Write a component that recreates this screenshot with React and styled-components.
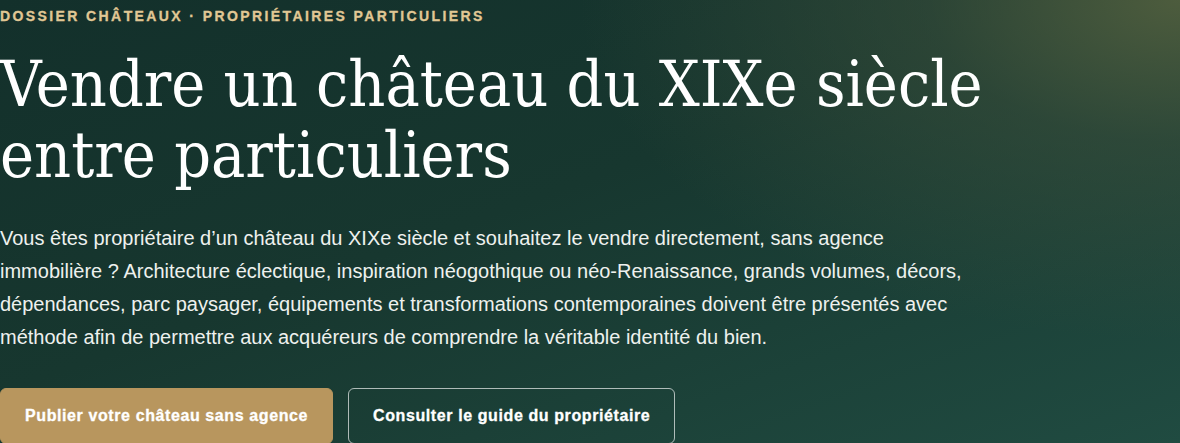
import React from "react"
import styled, { createGlobalStyle } from "styled-components"

const Global = createGlobalStyle`
  html, body {
    margin: 0;
    padding: 0;
    background: #14312c;
  }
  * { box-sizing: border-box; }
`

const Hero = styled.section`
  min-height: 443px;
  width: 100%;
  overflow: hidden;
  padding: 8px 0 0 0;
  color: #fff;
  background:
    radial-gradient(ellipse 600px 340px at 100% 0%, rgba(80, 94, 62, 0.95) 0%, rgba(64, 82, 60, 0.5) 42%, rgba(40, 70, 58, 0) 100%),
    linear-gradient(160deg, #13302b 0%, #17372f 45%, #204b41 100%);
`

const Eyebrow = styled.p`
  margin: 0;
  font-family: "Liberation Sans", Arial, sans-serif;
  font-weight: 700;
  font-size: 14px;
  letter-spacing: 2.4px;
  line-height: 16px;
  text-transform: uppercase;
  color: #e0c794;
  -webkit-text-stroke: 0.3px #e0c794;
`

const Title = styled.h1`
  margin: 25px 0 0 0;
  font-family: "DejaVu Serif Condensed", "DejaVu Serif", Georgia, serif;
  font-weight: 400;
  font-size: 64px;
  line-height: 71px;
  color: #fff;
`

const Lead = styled.p`
  margin: 31px 0 0 0;
  max-width: 980px;
  font-family: "Liberation Sans", Arial, sans-serif;
  font-size: 20px;
  line-height: 33px;
  color: #eef1ee;
`

const Actions = styled.div`
  display: flex;
  gap: 15px;
  margin-top: 34px;
`

const Button = styled.a`
  display: inline-flex;
  align-items: center;
  justify-content: center;
  height: 56px;
  padding: 0 24px;
  border-radius: 6px;
  font-family: "Liberation Sans", Arial, sans-serif;
  font-weight: 700;
  font-size: 16px;
  letter-spacing: 0.6px;
  color: #fff;
  -webkit-text-stroke: 0.3px #fff;
  text-decoration: none;
  background: ${p => (p.$primary ? "#b8965e" : "transparent")};
  border: 1px solid ${p => (p.$primary ? "#b8965e" : "rgba(255,255,255,0.65)")};
`

export default function App() {
  return (
    <>
      <Global />
      <Hero>
        <Eyebrow>Dossier châteaux · Propriétaires particuliers</Eyebrow>
        <Title>
          Vendre un château du XIXe siècle
          <br />
          entre particuliers
        </Title>
        <Lead>
          Vous êtes propriétaire d’un château du XIXe siècle et souhaitez le vendre directement, sans agence
          immobilière ? Architecture éclectique, inspiration néogothique ou néo-Renaissance, grands volumes, décors,
          dépendances, parc paysager, équipements et transformations contemporaines doivent être présentés avec
          méthode afin de permettre aux acquéreurs de comprendre la véritable identité du bien.
        </Lead>
        <Actions>
          <Button $primary href="#">Publier votre château sans agence</Button>
          <Button href="#">Consulter le guide du propriétaire</Button>
        </Actions>
      </Hero>
    </>
  )
}
